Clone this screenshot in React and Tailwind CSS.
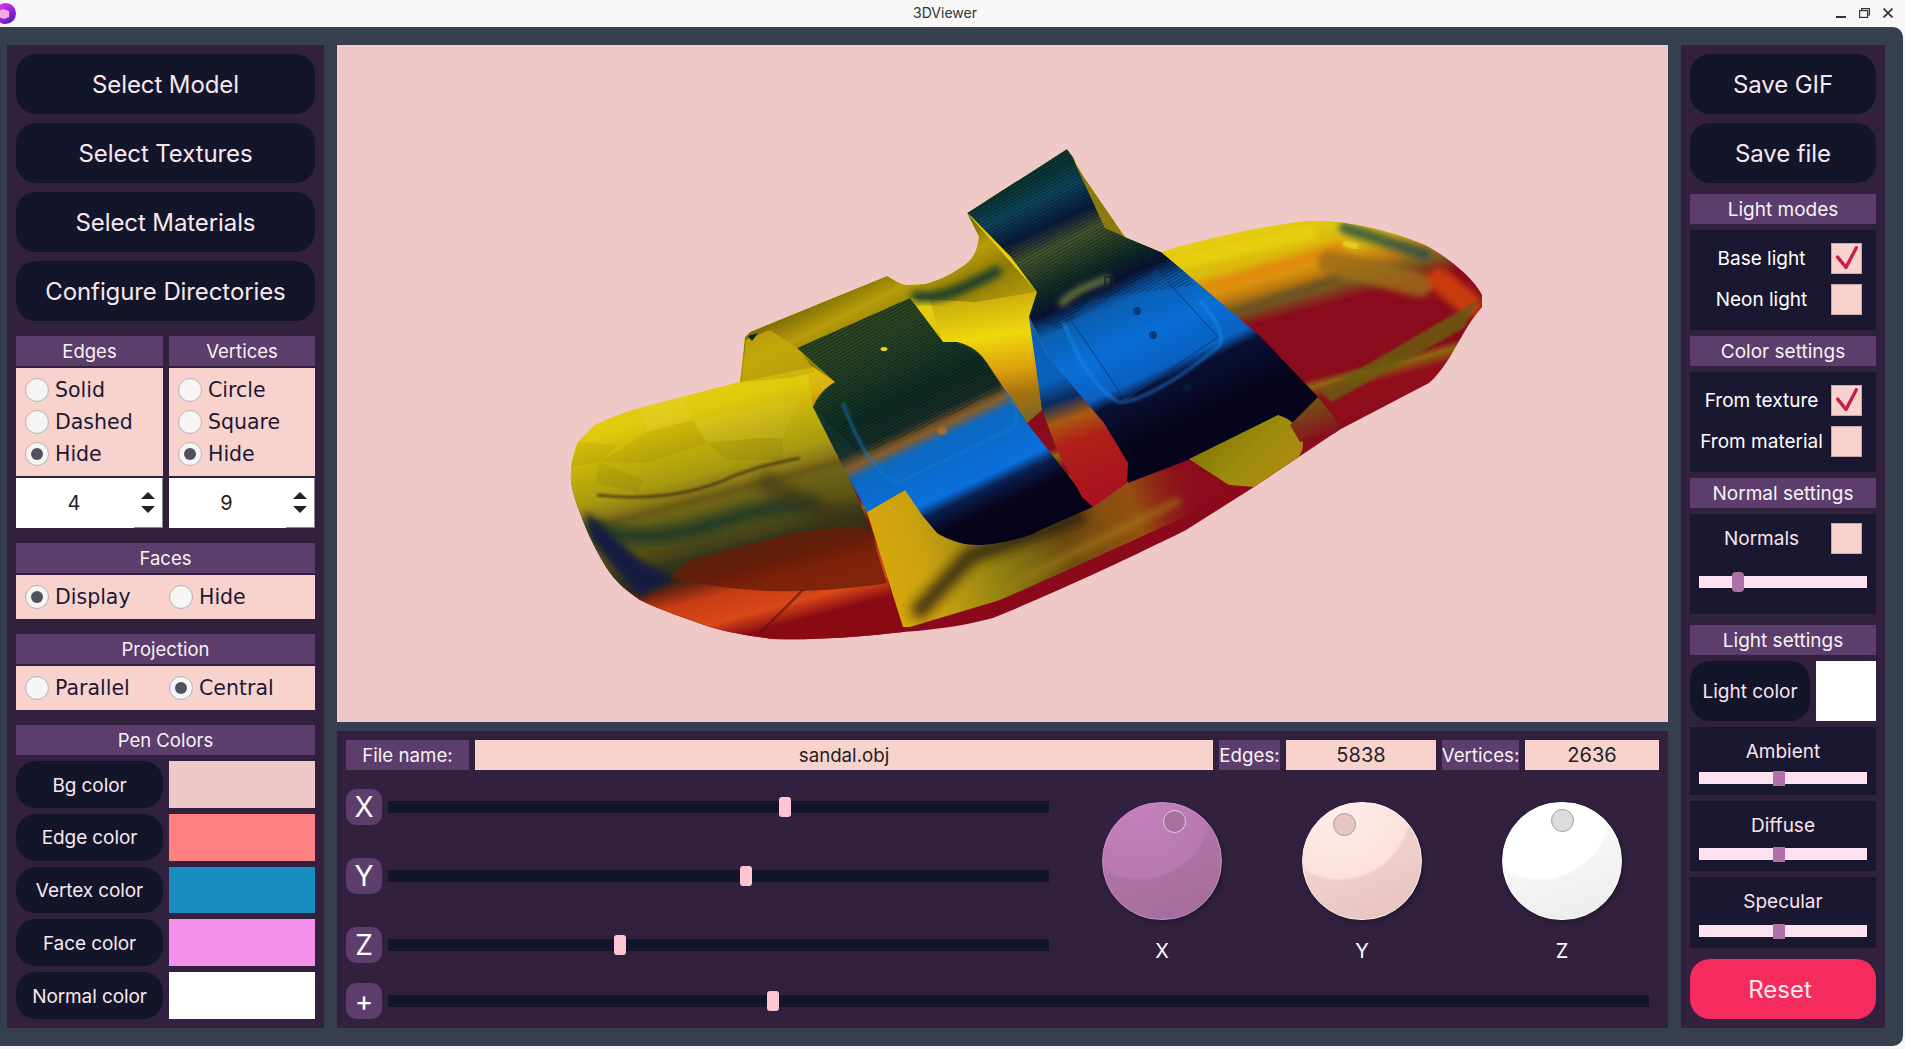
import React from 'react';

const bigBtn = "h-[60px] rounded-[20px] bg-[#13152b] text-[#f8e8ee] text-[24px] tracking-[-0.1px] pt-[2px] flex items-center justify-center";
const header = "h-[30px] bg-[#5c3d6b] text-[#f8f2f6] text-[18.5px] pt-[1px] flex items-center justify-center";
const headerR = "h-[30px] bg-[#5c3d6b] text-[#f8f2f6] text-[19px] pt-[2px] flex items-center justify-center";

const Radio = ({ checked, label, className = '' }) => (
  <div className={`flex items-center gap-[6px] h-[32px] ${className}`}>
    <div className="w-[24px] h-[24px] rounded-full bg-[#f5f5f5] border border-[#b8b0b0] flex items-center justify-center shrink-0">
      {checked && <div className="w-[12px] h-[12px] rounded-full bg-[#50505f]" />}
    </div>
    <span className="font-['DejaVu_Sans'] text-[20.5px] text-[#1c1a33] leading-none">{label}</span>
  </div>
);

const Spin = ({ value }) => (
  <div className="h-[50px] bg-white flex">
    <div className="flex-1 flex items-center justify-center pr-[2px] text-[20px] text-[#222]">{value}</div>
    <div className="w-[29px] flex flex-col items-center justify-center gap-[7px] border-r border-b border-[#8a8a8a]">
      <div className="w-0 h-0 border-x-[7px] border-x-transparent border-b-[7px] border-b-[#222]" />
      <div className="w-0 h-0 border-x-[7px] border-x-transparent border-t-[7px] border-t-[#222]" />
    </div>
  </div>
);

const PenRow = ({ label, color }) => (
  <div className="flex-1 flex gap-[6px]">
    <div className="w-[147px] rounded-[20px] bg-[#13152b] text-[#f8e8ee] text-[19px] tracking-[-0.1px] pt-[3px] flex items-center justify-center">{label}</div>
    <div className={`w-[146px] ${color}`} />
  </div>
);

const Check = ({ checked }) => (
  <div className="w-[31px] h-[31px] bg-[#f8d3ce] border border-[#c9a8a4] shrink-0">
    {checked && (
      <svg viewBox="0 0 31 31" className="w-full h-full">
        <polyline points="6,14 15,25 26,4" fill="none" stroke="#c81e4e" strokeWidth="3.6" strokeLinecap="round" strokeLinejoin="round" />
      </svg>
    )}
  </div>
);

const CheckRow = ({ label, checked, color = 'text-white' }) => (
  <div className="flex items-center h-[31px]">
    <div className={`w-[141px] text-center text-[19px] pl-[2px] pt-[2px] ${color}`}>{label}</div>
    <Check checked={checked} />
  </div>
);

const PaleSlider = ({ left, rounded, top }) => (
  <div className="relative h-[12px] mx-[9px] bg-[#fbe2ee]">
    <div className={`absolute w-[12px] bg-[#b070a8] ${left} ${top} ${rounded}`} />
  </div>
);

const Axis = ({ label, left, track }) => (
  <div className="flex items-center gap-[6px] h-[36px]">
    <div className="w-[36px] h-[36px] rounded-[10px] bg-[#5c3d6b] text-white text-[28px] flex items-center justify-center shrink-0">{label}</div>
    <div className={`relative h-[12px] bg-[#13152b] ${track}`}>
      <div className={`absolute -top-[4px] w-[12px] h-[20px] rounded-[3px] bg-[#fcc5cf] ${left}`} />
    </div>
  </div>
);

const Knob = ({ label, face, dot, dotClass }) => (
  <div className="w-[120px] flex flex-col items-center">
    <div className={`relative w-[120px] h-[120px] rounded-full shadow-[2px_2px_5px_rgba(0,0,0,0.3)] ${face}`}>
      <div className={`absolute w-[23px] h-[23px] rounded-full border ${dot} ${dotClass}`} />
    </div>
    <div className="mt-[19px] text-[20px] text-white leading-6">{label}</div>
  </div>
);

const Sandal = () => (
  <svg viewBox="337 45 1331 677" className="w-full h-full block">
    <defs>
      <clipPath id="shoe">
        <path d="M571 480 C570 465 575 448 578 442 L595 425 C610 418 625 412 640 408 L740 382 L745 337 L750 332 L887 276 C893 279 900 285 907 285 L925 284 C940 280 950 275 960 268 C970 262 977 255 979 237 L967 213 L1067 149 L1073 157 L1084 177 L1125 237 L1161 252 C1200 240 1260 226 1307 221 C1345 219 1395 232 1425 245 C1450 258 1475 280 1482 295 L1482 307 C1470 320 1460 340 1450 357 C1440 372 1435 378 1429 383 L1339 430 L1254 487 L1186 530 C1130 558 1050 595 993 618 C960 627 930 630 893 633 C850 638 810 640 773 639 C750 636 730 633 710 627 C685 618 660 610 640 600 C625 590 615 580 610 573 C598 555 588 535 580 513 C575 500 572 490 571 480 Z" />
      </clipPath>
      <linearGradient id="base" gradientUnits="userSpaceOnUse" x1="1000" y1="300" x2="1065" y2="541">
        <stop offset="0" stopColor="#e4cc10" />
        <stop offset="0.16" stopColor="#d8b00e" />
        <stop offset="0.23" stopColor="#c47c10" />
        <stop offset="0.29" stopColor="#7a5a20" />
        <stop offset="0.36" stopColor="#8a0c1c" />
        <stop offset="0.63" stopColor="#8a0c1c" />
        <stop offset="0.66" stopColor="#8a6a10" />
        <stop offset="0.71" stopColor="#900f1a" />
        <stop offset="1" stopColor="#8a0a1c" />
      </linearGradient>
      <linearGradient id="toe" gradientUnits="userSpaceOnUse" x1="690" y1="370" x2="760" y2="631">
        <stop offset="0" stopColor="#e8d00e" />
        <stop offset="0.15" stopColor="#e0c80c" />
        <stop offset="0.28" stopColor="#c0ac0a" />
        <stop offset="0.38" stopColor="#a89a10" />
        <stop offset="0.44" stopColor="#8a7a18" />
        <stop offset="0.47" stopColor="#6a5a14" />
        <stop offset="0.5" stopColor="#6e6418" />
        <stop offset="0.6" stopColor="#5c5214" />
        <stop offset="0.68" stopColor="#33361c" />
        <stop offset="0.74" stopColor="#3a2a14" />
        <stop offset="0.77" stopColor="#6a2410" />
        <stop offset="0.83" stopColor="#c83c14" />
        <stop offset="0.93" stopColor="#d84818" />
        <stop offset="1" stopColor="#8a0a14" />
      </linearGradient>
      <linearGradient id="wall" gradientUnits="userSpaceOnUse" x1="800" y1="300" x2="850" y2="400">
        <stop offset="0" stopColor="#6f6008" />
        <stop offset="0.3" stopColor="#b89c08" />
        <stop offset="0.55" stopColor="#8c7a08" />
        <stop offset="1" stopColor="#c4a808" />
      </linearGradient>
      <linearGradient id="between" gradientUnits="userSpaceOnUse" x1="990" y1="290" x2="1010" y2="420">
        <stop offset="0" stopColor="#c4a80c" />
        <stop offset="0.35" stopColor="#f0d80c" />
        <stop offset="0.62" stopColor="#dca00e" />
        <stop offset="0.8" stopColor="#a87410" />
        <stop offset="1" stopColor="#7c6a20" />
      </linearGradient>
      <linearGradient id="rightStrap" gradientUnits="userSpaceOnUse" x1="1000" y1="189" x2="1151" y2="513">
        <stop offset="0.014" stopColor="#0a3a3a" />
        <stop offset="0.075" stopColor="#0e4a62" />
        <stop offset="0.15" stopColor="#0a1c40" />
        <stop offset="0.21" stopColor="#4a5a30" />
        <stop offset="0.31" stopColor="#0f3028" />
        <stop offset="0.37" stopColor="#0a1438" />
        <stop offset="0.43" stopColor="#0a5fb0" />
        <stop offset="0.54" stopColor="#0870d8" />
        <stop offset="0.645" stopColor="#0a60c0" />
        <stop offset="0.68" stopColor="#0a1034" />
        <stop offset="0.81" stopColor="#06041c" />
        <stop offset="1" stopColor="#060320" />
      </linearGradient>
      <linearGradient id="leftStrap" gradientUnits="userSpaceOnUse" x1="850" y1="337" x2="951" y2="553">
        <stop offset="0.03" stopColor="#2f4a24" />
        <stop offset="0.2" stopColor="#1c3d2a" />
        <stop offset="0.325" stopColor="#0e3026" />
        <stop offset="0.44" stopColor="#18302c" />
        <stop offset="0.5" stopColor="#8a5c28" />
        <stop offset="0.55" stopColor="#0a68c0" />
        <stop offset="0.77" stopColor="#0a70dc" />
        <stop offset="0.82" stopColor="#0a2050" />
        <stop offset="0.9" stopColor="#08041c" />
        <stop offset="1" stopColor="#06021a" />
      </linearGradient>
      <linearGradient id="flap" gradientUnits="userSpaceOnUse" x1="1040" y1="350" x2="1095" y2="510">
        <stop offset="0" stopColor="#0a5fb8" />
        <stop offset="0.2" stopColor="#0a5fb8" />
        <stop offset="0.32" stopColor="#0a2c60" />
        <stop offset="0.44" stopColor="#a85a10" />
        <stop offset="0.58" stopColor="#b02018" />
        <stop offset="1" stopColor="#a80f22" />
      </linearGradient>
      <linearGradient id="mid" gradientUnits="userSpaceOnUse" x1="880" y1="570" x2="1200" y2="470">
        <stop offset="0" stopColor="#d8a80c" />
        <stop offset="0.15" stopColor="#c8a010" />
        <stop offset="0.35" stopColor="#8c8010" />
        <stop offset="0.55" stopColor="#6e4c10" />
        <stop offset="0.78" stopColor="#965010" />
        <stop offset="1" stopColor="#8a0c1c" stopOpacity="0" />
      </linearGradient>
      <linearGradient id="tailRight" gradientUnits="userSpaceOnUse" x1="1200" y1="420" x2="1270" y2="490">
        <stop offset="0" stopColor="#7a7008" />
        <stop offset="0.6" stopColor="#9c8c0c" />
        <stop offset="1" stopColor="#b08a10" />
      </linearGradient>
      <linearGradient id="tipEnd" gradientUnits="userSpaceOnUse" x1="1310" y1="395" x2="1325" y2="435">
        <stop offset="0" stopColor="#6a6210" />
        <stop offset="1" stopColor="#8a1020" />
      </linearGradient>
      <pattern id="stripes" width="3" height="3" patternUnits="userSpaceOnUse" patternTransform="rotate(-30)">
        <rect width="3" height="1.2" fill="#000" fillOpacity="0.38" />
      </pattern>
      <filter id="soft" x="-30%" y="-30%" width="160%" height="160%"><feGaussianBlur stdDeviation="3" /></filter>
      <filter id="softer" x="-30%" y="-30%" width="160%" height="160%"><feGaussianBlur stdDeviation="6" /></filter>
      <filter id="fine" x="-30%" y="-30%" width="160%" height="160%"><feGaussianBlur stdDeviation="1.2" /></filter>
    </defs>

    <g clipPath="url(#shoe)">
      <rect x="337" y="45" width="1331" height="677" fill="url(#base)" />

      {/* streaks across the vamp */}
      <g filter="url(#soft)" fill="none" strokeLinecap="round">
        <path d="M1170 300 L1340 250" stroke="#e08c0c" strokeWidth="16" />
        <path d="M1170 335 L1340 278" stroke="#6a5220" strokeWidth="9" />
        <path d="M1180 262 L1310 232" stroke="#e8cf10" strokeWidth="14" />
        <path d="M1345 228 L1425 254" stroke="#20504a" strokeWidth="12" strokeOpacity="0.8" />
        <path d="M1330 262 L1420 285" stroke="#9a6c18" strokeWidth="24" strokeOpacity="0.85" />
        <path d="M1440 280 L1470 305" stroke="#c83a10" strokeWidth="24" />
      </g>
      <path d="M1343 243 L1358 247" stroke="#e8cc20" strokeWidth="6" filter="url(#fine)" />
      <path d="M1478 300 L1320 392 L1332 402 L1464 328 Z" fill="#6a5a10" fillOpacity="0.85" filter="url(#fine)" />

      {/* toe end of the footbed */}
      <path d="M560 320 L800 320 L813 407 L850 480 L877 543 L905 640 L560 660 Z" fill="url(#toe)" />
      <g fill="#fff" fillOpacity="0.06">
        <path d="M640 408 L683 397 L692 420 L647 432 Z" />
        <path d="M692 420 L733 413 L757 438 L707 443 Z" />
        <path d="M733 413 L797 400 L783 438 L757 438 Z" />
      </g>
      <g fill="#000" fillOpacity="0.05">
        <path d="M600 462 L647 432 L692 420 L707 443 L647 463 Z" />
        <path d="M595 483 L600 462 L643 480 L638 493 Z" />
        <path d="M707 443 L757 438 L783 438 L783 460 L727 460 Z" />
        <path d="M578 442 L618 445 L600 462 L571 467 Z" />
      </g>
      <g filter="url(#softer)" fill="none">
        <path d="M585 525 C630 545 680 535 720 522 C750 512 775 505 820 505" stroke="#12352a" strokeWidth="14" strokeOpacity="0.9" />
        <path d="M760 480 L860 530" stroke="#3c3010" strokeWidth="20" strokeOpacity="0.6" />
      </g>
      <path d="M597 495 C640 500 680 497 720 482 C745 470 765 465 800 458" stroke="#3a2a10" strokeWidth="3" fill="none" strokeOpacity="0.7" filter="url(#fine)" />
      <path d="M593 543 L640 597 L677 578 L643 563 L603 527 L585 512 Z" fill="#141a40" filter="url(#soft)" />
      <path d="M690 560 C750 545 820 520 870 530 L887 583 C830 592 750 598 670 577 Z" fill="#6a1c08" fillOpacity="0.8" />
      <path d="M803 590 L760 633" stroke="#4a1a10" strokeWidth="2.5" strokeOpacity="0.6" />

      {/* midsole seen under the left strap */}
      <path d="M867 512 L885 570 L903 627 L910 627 L1000 600 L1090 560 L1200 510 L1230 470 L1120 470 L905 490 Z" fill="url(#mid)" />
      <path d="M915 615 L970 556 L1085 515" stroke="#2a2010" strokeWidth="16" fill="none" strokeOpacity="0.85" filter="url(#softer)" />
      <path d="M1000 590 L1180 500" stroke="#a07a10" strokeWidth="9" fill="none" strokeOpacity="0.55" filter="url(#soft)" />

      {/* back wall of the heel and the gap between the straps */}
      <path d="M925 286 L1037 292 L1029 317 L1050 360 L1042 410 L1027 423 L987 363 L957 342 L943 342 Z" fill="url(#between)" />
      <path d="M740 382 L745 337 L750 332 L887 276 L907 285 L925 284 L960 268 L979 237 L967 213 L1037 292 L975 302 L910 298 L797 348 L835 382 L813 367 Z" fill="url(#wall)" />
      <path d="M770 330 L800 350 L815 372 L790 378 L742 382 L746 340 Z" fill="#c8ac0a" fillOpacity="0.75" />
      <path d="M748 336 L758 333 L752 341 Z" fill="#0a2420" />
      <path d="M912 296 C940 302 970 285 1000 270" stroke="#0f3a30" strokeWidth="11" fill="none" strokeOpacity="0.85" filter="url(#soft)" />

      {/* left strap and its buckle */}
      <path d="M797 348 L910 298 L943 342 L957 342 C970 345 980 352 987 363 L1027 423 L1093 507 L1040 530 C1030 538 990 546 977 545 C955 545 937 533 937 533 L922 515 L905 490 L867 512 L850 480 L813 407 C818 395 825 388 835 382 Z" fill="url(#leftStrap)" />
      <path d="M797 348 L910 298 L943 342 L957 342 L987 363 L1002 390 L920 430 L860 455 L813 407 L827 387 L835 382 Z" fill="url(#stripes)" />
      <path d="M843 403 C860 450 880 480 900 482 L1012 428 C1022 418 1015 405 1005 392" stroke="#0f7ad0" strokeWidth="4" fill="none" strokeOpacity="0.45" filter="url(#fine)" />
      <ellipse cx="942" cy="431" rx="5" ry="4" fill="#a06a30" />
      <ellipse cx="884" cy="349" rx="3.5" ry="2" fill="#f0d010" />

      {/* right strap and its buckle */}
      <path d="M1076 165 L1084 177 L1125 237 L1135 245 L1105 228 Z" fill="#8a7a10" />
      <path d="M967 213 L1067 149 L1073 157 L1076 165 L1105 228 L1125 237 L1161 252 L1186 273 L1261 337 L1318 397 L1339 423 L1339 432 L1300 442 L1290 440 L1193 458 L1128 483 L1104 423 L1050 360 L1029 317 L1037 292 L1011 257 L971 216 Z" fill="url(#rightStrap)" />
      <path d="M967 213 L1067 149 L1076 165 L1105 228 L1125 237 L1161 252 L1186 273 L1195 285 L1090 300 L1060 330 L1029 317 L1037 292 L1011 257 Z" fill="url(#stripes)" />
      <path d="M1029 317 L1050 360 L1104 423 L1128 463 L1127 483 L1093 507 L1082 497 L1057 450 L1042 410 Z" fill="url(#flap)" />
      <path d="M1189 459 L1278 415 C1295 420 1303 433 1303 445 C1303 455 1293 463 1293 463 L1254 487 L1229 485 Z" fill="url(#tailRight)" />
      <path d="M1318 397 L1339 423 L1339 432 L1300 442 L1290 425 Z" fill="url(#tipEnd)" />
      <path d="M1071 320 L1157 270 L1218 337 L1125 400 Z" fill="#0a66c8" fillOpacity="0.18" stroke="#0a3a78" strokeWidth="1" strokeLinejoin="round" />
      <path d="M1063 322 C1075 350 1090 385 1118 402 C1135 404 1180 380 1220 345 C1225 335 1215 318 1200 300" fill="none" stroke="#1a90f0" strokeWidth="4" strokeOpacity="0.4" filter="url(#fine)" />
      <path d="M1060 305 C1075 290 1090 285 1110 278" stroke="#7c8440" strokeWidth="6" fill="none" filter="url(#soft)" />
      <ellipse cx="1137" cy="311" rx="4" ry="4" fill="#083a78" />
      <ellipse cx="1153" cy="335" rx="4" ry="4" fill="#083a78" />
      <ellipse cx="1187" cy="387" rx="4" ry="4" fill="#0a1a3a" />
      <rect x="1105" y="277" width="6" height="13" fill="none" stroke="#0a1a40" strokeWidth="1.2" />
    </g>
  </svg>
);

const LeftPanel = () => (
  <div className="w-[317px] bg-[#31213f] p-[9px] flex flex-col">
    <div className="flex flex-col gap-[9px]">
      <div className={bigBtn}>Select Model</div>
      <div className={bigBtn}>Select Textures</div>
      <div className={bigBtn}>Select Materials</div>
      <div className={bigBtn}>Configure Directories</div>
    </div>
    <div className="mt-[15px] flex gap-[6px]">
      <div className="w-[147px] flex flex-col gap-[2px]">
        <div className={header}>Edges</div>
        <div className="h-[108px] bg-[#f8d3ce] px-[9px] flex flex-col justify-center">
          <Radio label="Solid" />
          <Radio label="Dashed" />
          <Radio label="Hide" checked />
        </div>
        <Spin value="4" />
      </div>
      <div className="w-[146px] flex flex-col gap-[2px]">
        <div className={header}>Vertices</div>
        <div className="h-[108px] bg-[#f8d3ce] px-[9px] flex flex-col justify-center">
          <Radio label="Circle" />
          <Radio label="Square" />
          <Radio label="Hide" checked />
        </div>
        <Spin value="9" />
      </div>
    </div>
    <div className="mt-[15px] flex flex-col gap-[2px]">
      <div className={header}>Faces</div>
      <div className="h-[44px] bg-[#f8d3ce] px-[9px] flex items-center">
        <Radio label="Display" checked className="w-[144px]" />
        <Radio label="Hide" />
      </div>
    </div>
    <div className="mt-[15px] flex flex-col gap-[2px]">
      <div className={header}>Projection</div>
      <div className="h-[44px] bg-[#f8d3ce] px-[9px] flex items-center">
        <Radio label="Parallel" className="w-[144px]" />
        <Radio label="Central" checked />
      </div>
    </div>
    <div className="mt-[15px] flex flex-col gap-[6px]">
      <div className={header}>Pen Colors</div>
      <div className="h-[258px] flex flex-col gap-[6px]">
        <PenRow label="Bg color" color="bg-[#efc8c8]" />
        <PenRow label="Edge color" color="bg-[#ff8080]" />
        <PenRow label="Vertex color" color="bg-[#198cbf]" />
        <PenRow label="Face color" color="bg-[#f58fec]" />
        <PenRow label="Normal color" color="bg-white" />
      </div>
    </div>
  </div>
);

const RightPanel = () => (
  <div className="w-[204px] bg-[#31213f] p-[9px] flex flex-col">
    <div className="flex flex-col gap-[9px]">
      <div className={bigBtn}>Save GIF</div>
      <div className={bigBtn}>Save file</div>
    </div>
    <div className="mt-[11px] flex flex-col gap-[6px]">
      <div className={headerR}>Light modes</div>
      <div className="h-[100px] bg-[#1a1830] pt-[13px] flex flex-col gap-[10px]">
        <CheckRow label="Base light" checked />
        <CheckRow label="Neon light" />
      </div>
      <div className={headerR}>Color settings</div>
      <div className="h-[100px] bg-[#1a1830] pt-[13px] flex flex-col gap-[10px]">
        <CheckRow label="From texture" checked />
        <CheckRow label="From material" />
      </div>
      <div className={headerR}>Normal settings</div>
      <div className="h-[100px] bg-[#1a1830] pt-[9px] flex flex-col gap-[22px]">
        <CheckRow label="Normals" color="text-[#fbe2ee]" />
        <PaleSlider left="left-[33px]" top="-top-[4px] h-[20px]" rounded="rounded-[4px]" />
      </div>
    </div>
    <div className="mt-[11px] flex flex-col gap-[6px]">
      <div className={headerR}>Light settings</div>
      <div className="h-[60px] flex gap-[6px]">
        <div className="w-[120px] rounded-[20px] bg-[#13152b] text-[#fbe2ee] text-[19px] pt-[2px] flex items-center justify-center">Light color</div>
        <div className="w-[60px] bg-white" />
      </div>
      <div className="h-[68px] bg-[#1a1830] pt-[13px] flex flex-col gap-[8px]">
        <div className="h-[24px] text-center text-[19px] leading-6 text-[#fbe2ee]">Ambient</div>
        <PaleSlider left="left-[74px]" top="-top-[1px] h-[15px]" rounded="" />
      </div>
      <div className="h-[70px] bg-[#1a1830] pt-[13px] flex flex-col gap-[10px]">
        <div className="h-[24px] text-center text-[19px] leading-6 text-[#fbe2ee]">Diffuse</div>
        <PaleSlider left="left-[74px]" top="-top-[1px] h-[15px]" rounded="" />
      </div>
      <div className="h-[71px] bg-[#1a1830] pt-[13px] flex flex-col gap-[11px]">
        <div className="h-[24px] text-center text-[19px] leading-6 text-[#fbe2ee]">Specular</div>
        <PaleSlider left="left-[74px]" top="-top-[1px] h-[15px]" rounded="" />
      </div>
    </div>
    <div className="mt-[11px] h-[60px] rounded-[20px] bg-[#f52b5e] text-[#fde8ee] text-[24px] pt-[2px] flex items-center justify-center pr-[6px]">Reset</div>
  </div>
);

const BottomPanel = () => (
  <div className="h-[297px] bg-[#31213f] pt-[9px] px-[9px] flex flex-col">
    <div className="h-[30px] flex gap-[6px] text-[18.7px]">
      <div className="w-[123px] bg-[#5c3d6b] text-[#f8f2f6] pt-[2px] flex items-center justify-center">File name:</div>
      <div className="w-[738px] bg-[#f8d3ce] text-[#222] pt-[2px] flex items-center justify-center">sandal.obj</div>
      <div className="w-[61px] bg-[#5c3d6b] text-[#f8f2f6] pt-[2px] flex items-center justify-center">Edges:</div>
      <div className="w-[150px] bg-[#f8d3ce] text-[#222] text-[20px] flex items-center justify-center">5838</div>
      <div className="w-[77px] bg-[#5c3d6b] text-[#f8f2f6] pt-[2px] flex items-center justify-center">Vertices:</div>
      <div className="w-[134px] bg-[#f8d3ce] text-[#222] text-[20px] flex items-center justify-center">2636</div>
    </div>
    <div className="mt-[19px] h-[174px] flex">
      <div className="w-[703px] flex flex-col gap-[33px]">
        <Axis label="X" left="left-[391px]" track="w-[661px]" />
        <Axis label="Y" left="left-[352px]" track="w-[661px]" />
        <Axis label="Z" left="left-[226px]" track="w-[661px]" />
      </div>
      <div className="ml-[53px] mt-[13px] flex gap-[80px]">
        <Knob
          label="X"
          face="border border-[#c88cc4] bg-[radial-gradient(circle_72px_at_31%_5%,#c680bc_0%,#b97aaf_96%,rgba(0,0,0,0)_100%),linear-gradient(160deg,#ba7bb0,#a26b9b)]"
          dot="bg-[#a86f9f] border-[#e0d0e0]"
          dotClass="left-[60px] top-[7px]"
        />
        <Knob
          label="Y"
          face="border border-[#fbeeea] bg-[radial-gradient(circle_72px_at_31%_5%,#feeeec_0%,#fde0dc_96%,rgba(0,0,0,0)_100%),linear-gradient(160deg,#fbdcd8,#e6c2be)]"
          dot="bg-[#e6c5c2] border-[#a89a9a]"
          dotClass="left-[30px] top-[10px]"
        />
        <Knob
          label="Z"
          face="border border-white bg-[radial-gradient(circle_72px_at_31%_5%,#ffffff_0%,#ffffff_96%,rgba(0,0,0,0)_100%),linear-gradient(160deg,#ffffff,#ebebeb)]"
          dot="bg-[#dcdcdc] border-[#a0a0a0]"
          dotClass="left-[48px] top-[6px]"
        />
      </div>
    </div>
    <div className="mt-[20px]">
      <Axis label="+" left="left-[379px]" track="w-[1261px]" />
    </div>
  </div>
);

const App = () => {
  return (
    <div className="w-[1905px] h-[1049px] bg-[#f7f7f7] overflow-hidden font-['Inter',sans-serif]">
      <div className="h-[27px] w-[1890px] grid grid-cols-[1fr_auto_1fr] items-center">
        <div className="flex">
          <svg width="21" height="21" viewBox="0 0 21 21" className="-ml-[5px]">
            <defs>
              <linearGradient id="logo" x1="0" y1="0" x2="1" y2="1">
                <stop offset="0" stopColor="#f040e0" />
                <stop offset="1" stopColor="#4a10c8" />
              </linearGradient>
            </defs>
            <circle cx="10.5" cy="10.5" r="10.5" fill="url(#logo)" />
            <path d="M8 6 L14 8 L14 14 L9 16 L4 14 L4 8 Z" fill="#f7a8e8" />
          </svg>
        </div>
        <div className="text-[14px] text-[#333] pb-[3px]">3DViewer</div>
        <div className="flex items-center justify-end gap-[13px] -mr-[3px] pb-[2px]">
          <svg width="10" height="12" viewBox="0 0 10 12"><rect x="0" y="9" width="10" height="2" fill="#333" /></svg>
          <svg width="11" height="10" viewBox="0 0 11 10" fill="none" stroke="#333" strokeWidth="1.2"><rect x="0.6" y="2.6" width="8" height="6.8" /><path d="M2.6 2.4 V0.6 H10.4 V7 H8.8" /></svg>
          <svg width="10" height="10" viewBox="0 0 10 10" stroke="#333" strokeWidth="1.7"><path d="M0.5 0.5 L9.5 9.5 M9.5 0.5 L0.5 9.5" /></svg>
        </div>
      </div>
      <div className="w-[1903px] h-[1019px] bg-[#363f50] rounded-tr-[10px] rounded-br-[10px] pt-[18px] px-[7px] flex gap-[13px]">
        <div className="h-[983px] flex"><LeftPanel /></div>
        <div className="w-[1331px] h-[983px] flex flex-col gap-[9px]">
          <div className="h-[677px] bg-[#efc8c8]"><Sandal /></div>
          <BottomPanel />
        </div>
        <div className="h-[983px] flex"><RightPanel /></div>
      </div>
    </div>
  );
};

export default App;
